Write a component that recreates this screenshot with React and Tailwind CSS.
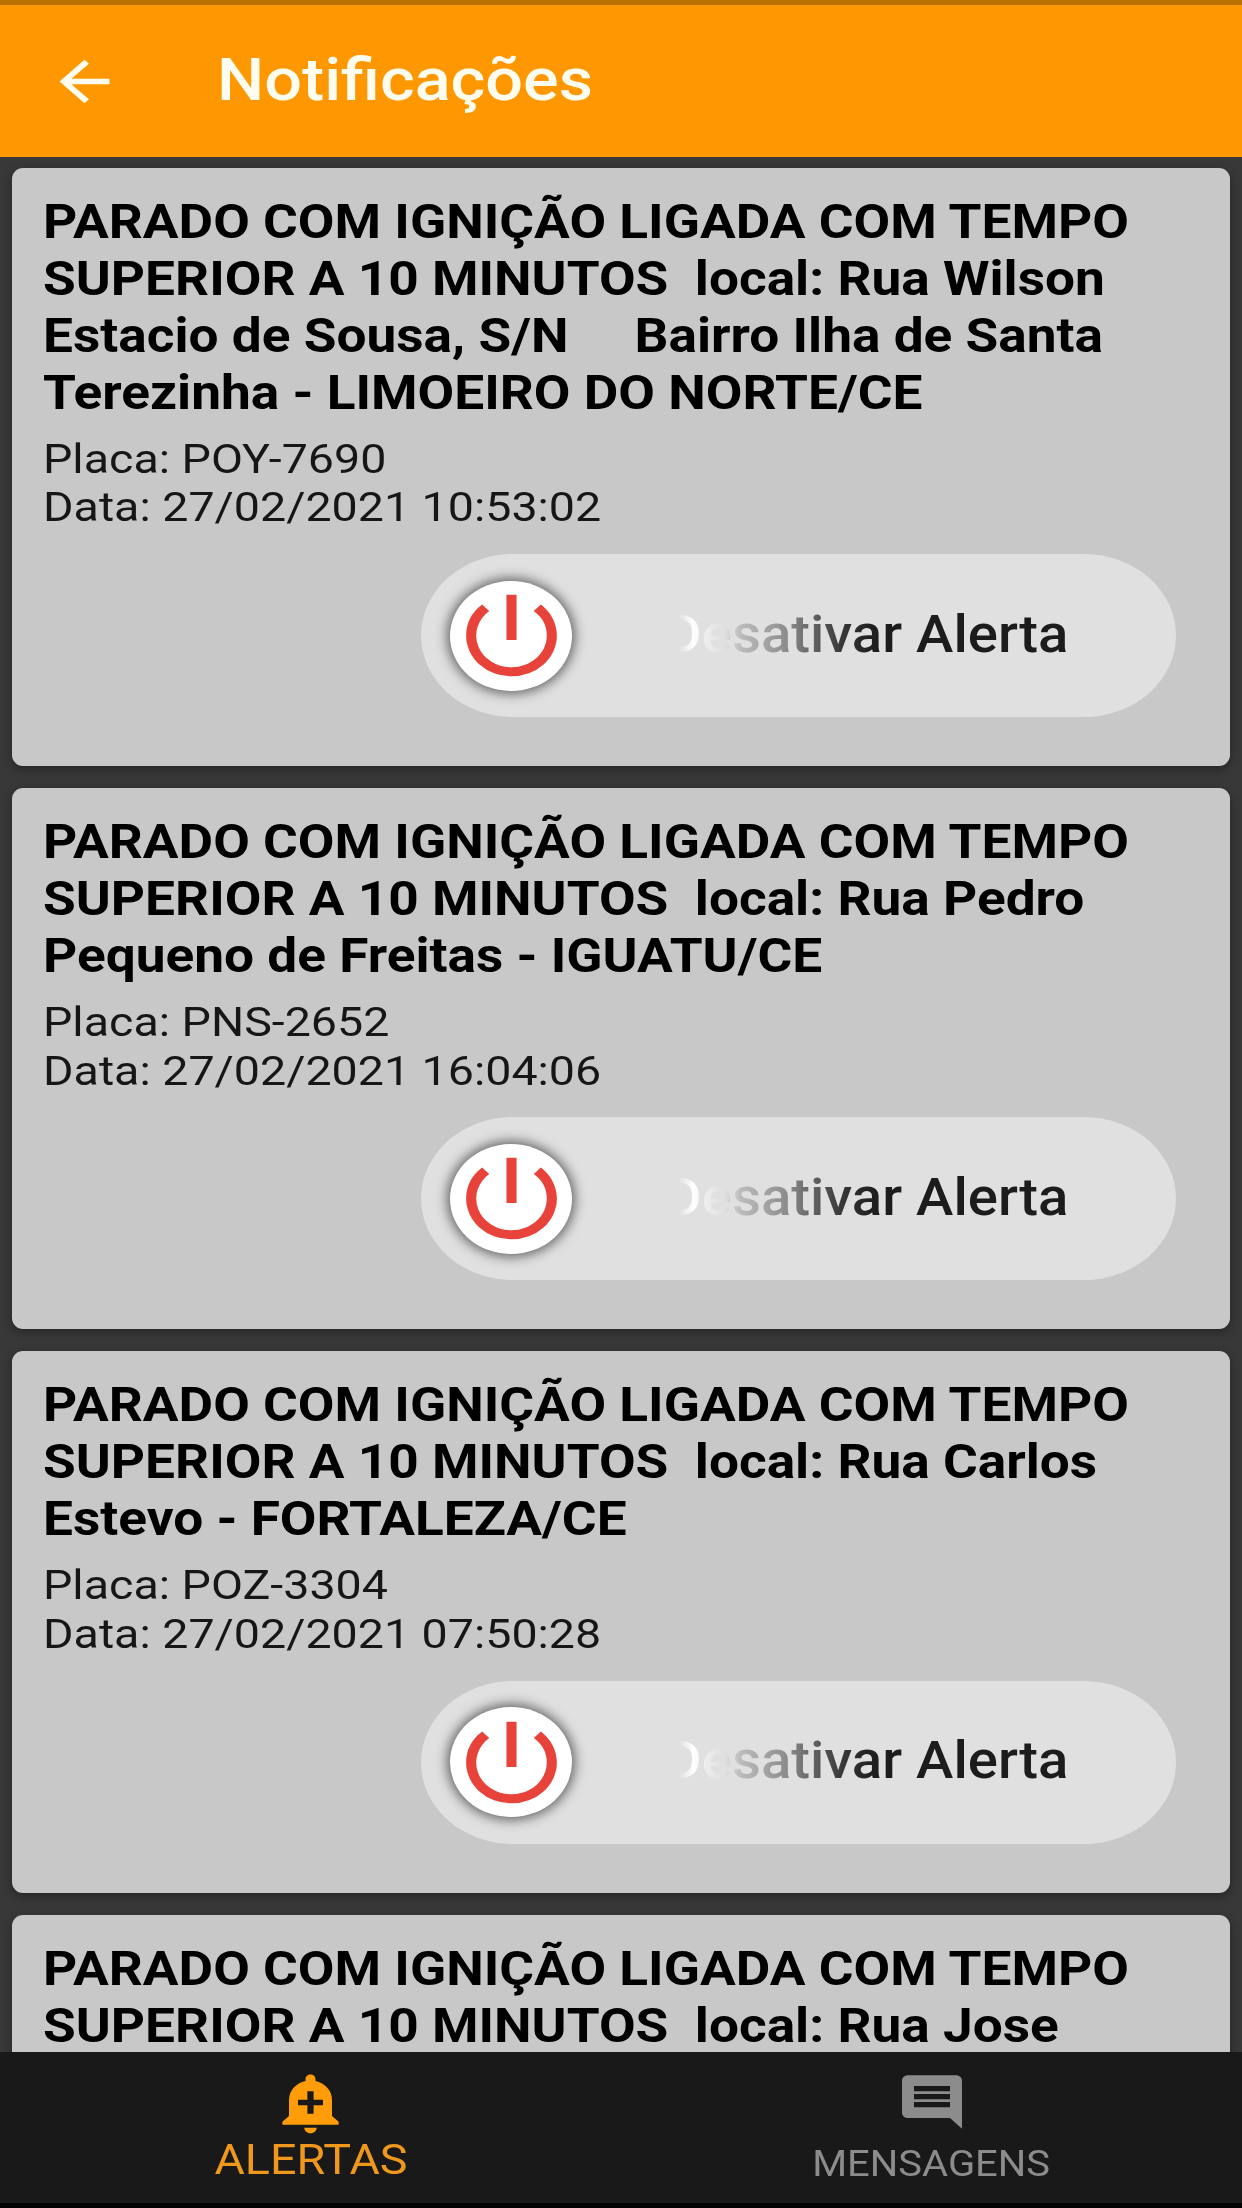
import { MdAddAlert, MdArrowBack, MdComment, MdPowerSettingsNew } from 'react-icons/md';

const alerts = [
  {
    id: 1,
    lines: [
      'PARADO COM IGNIÇÃO LIGADA COM TEMPO',
      'SUPERIOR A 10 MINUTOS  local: Rua Wilson',
      'Estacio de Sousa, S/N     Bairro Ilha de Santa',
      'Terezinha - LIMOEIRO DO NORTE/CE',
    ],
    placa: 'POY-7690',
    data: '27/02/2021 10:53:02',
  },
  {
    id: 2,
    lines: [
      'PARADO COM IGNIÇÃO LIGADA COM TEMPO',
      'SUPERIOR A 10 MINUTOS  local: Rua Pedro',
      'Pequeno de Freitas - IGUATU/CE',
    ],
    placa: 'PNS-2652',
    data: '27/02/2021 16:04:06',
  },
  {
    id: 3,
    lines: [
      'PARADO COM IGNIÇÃO LIGADA COM TEMPO',
      'SUPERIOR A 10 MINUTOS  local: Rua Carlos',
      'Estevo - FORTALEZA/CE',
    ],
    placa: 'POZ-3304',
    data: '27/02/2021 07:50:28',
  },
  {
    id: 4,
    lines: [
      'PARADO COM IGNIÇÃO LIGADA COM TEMPO',
      'SUPERIOR A 10 MINUTOS  local: Rua Jose',
    ],
  },
];

function SlideButton() {
  return (
    <div className="mt-[22.2px] ml-[409px] flex h-[163px] w-[755px] shrink-0 items-center rounded-[92px/81.5px] bg-[#e0e0e0] pl-[29px]">
      <div className="flex h-[110px] w-[122px] shrink-0 items-center justify-center rounded-[50%] bg-white shadow-[0_0_12px_3px_rgba(0,0,0,0.55)]">
        <MdPowerSettingsNew className="h-[109px] w-[121px] text-[#e8433a]" preserveAspectRatio="none" />
      </div>
      {/* shimmer label */}
      <span className="mb-px ml-[93px] origin-left scale-x-[1.104] bg-[linear-gradient(90deg,#e0e0e0_0%,#e0e0e0_3.5%,#ffffff_7%,#eeeeee_10%,#dedede_15%,#bababa_19%,#a8a8a8_24%,#8c8c8c_30%,#747474_34%,#555555_39%,#383838_44%,#202020_51%,#1c1c1c_56%)] bg-clip-text text-[51px] font-medium whitespace-nowrap text-transparent">
        Desativar Alerta
      </span>
    </div>
  );
}

function AlertCard({ lines, placa, data }) {
  return (
    <div className="flex shrink-0 flex-col rounded-[11px] bg-[#c8c8c8] pt-[26px] pb-[49px] shadow-[0_3px_10px_rgba(0,0,0,0.35)]">
      <h2 className="ml-[30.5px] origin-left scale-x-[1.097] text-[48.5px] leading-[56.9px] font-bold whitespace-pre text-black">
        {lines.map((line) => (
          <span key={line} className="block">{line}</span>
        ))}
      </h2>
      {placa && (
        <>
          <div className="mt-[13px] ml-[30.5px] origin-left scale-x-[1.122] text-[41.5px] leading-[48.6px] whitespace-nowrap text-[#161616]">
            <p>Placa: {placa}</p>
            <p>Data: {data}</p>
          </div>
          <SlideButton />
        </>
      )}
    </div>
  );
}

export default function App() {
  return (
    <div className="flex h-[2208px] w-[1242px] flex-col overflow-hidden bg-[#383838] font-['Roboto',sans-serif]">
      <div className="h-[5px] shrink-0 bg-[#b97200]" />
      <header className="flex h-[152px] shrink-0 items-center bg-[#ff9800] pl-[47px] text-[#fffdf0]">
        <MdArrowBack className="h-[65px] w-[75px] shrink-0" preserveAspectRatio="none" />
        <h1 className="mb-[2px] ml-[95px] origin-left scale-x-[1.128] text-[59px] font-medium">Notificações</h1>
      </header>

      <main className="flex min-h-0 flex-1 flex-col gap-[22.2px] overflow-hidden px-[12px] pt-[11px]">
        {alerts.map((alert) => (
          <AlertCard key={alert.id} {...alert} />
        ))}
      </main>

      <nav className="flex h-[156px] shrink-0 border-b-[5px] border-black bg-[#191919]">
        <div className="flex flex-1 flex-col items-center pt-[17px] text-[#ff9c0a]">
          <MdAddAlert className="h-[67px] w-[75px]" preserveAspectRatio="none" />
          <span className="scale-x-[1.11] text-[42px] leading-[48px] text-[#f0981c]">ALERTAS</span>
        </div>
        <div className="flex flex-1 flex-col items-center pt-[18px] text-[#8c8c8c]">
          <MdComment className="h-[64px] w-[72px]" preserveAspectRatio="none" />
          <span className="mt-[9px] scale-x-[1.11] text-[36px] leading-[42px]">MENSAGENS</span>
        </div>
      </nav>
    </div>
  );
}
